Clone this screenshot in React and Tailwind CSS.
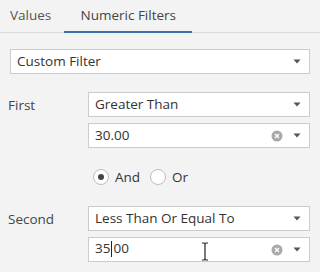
import React from 'react';

const font = { fontFamily: '"Open Sans", "Noto Sans", sans-serif' };

function Caret() {
  return (
    <svg width="8" height="5" viewBox="0 0 8 5" className="shrink-0">
      <path d="M0.5 0.5 L7.5 0.5 L4 4.5 Z" fill="#555" />
    </svg>
  );
}

function ClearIcon() {
  return (
    <svg width="12" height="12" viewBox="0 0 12 12" className="shrink-0">
      <circle cx="6" cy="6" r="5.5" fill="#a9a9a9" />
      <path d="M4 4 L8 8 M8 4 L4 8" stroke="#fff" strokeWidth="1.4" />
    </svg>
  );
}

function IBeam() {
  return (
    <svg width="8" height="19" viewBox="0 0 8 19" className="absolute left-[112px] top-[4px]">
      <path d="M1 1 H3 Q4 1 4 2.5 V16.5 Q4 18 3 18 H1 M7 1 H5 Q4 1 4 2.5 M4 16.5 Q4 18 5 18 H7" stroke="#222" strokeWidth="1.2" fill="none" />
    </svg>
  );
}

function Select({ value }) {
  return (
    <div className="flex items-center h-[25px] bg-white border border-[#cbcbcb] pl-[6px] pr-[8px]">
      <span className="flex-1 text-[13.5px] text-[#333] leading-none">{value}</span>
      <Caret />
    </div>
  );
}

function NumberInput({ value, caret }) {
  return (
    <div className="relative flex items-center h-[25px] bg-white border border-[#cbcbcb] pl-[6px] pr-[8px]">
      <span className="flex-1 text-[13.5px] text-[#333] leading-none">
        {caret ? (
          <>
            35<span className="inline-block w-px h-[16px] bg-[#222] align-middle -mt-[2px] mx-[1px]" />00
          </>
        ) : (
          value
        )}
      </span>
      {caret && <IBeam />}
      <div className="flex items-center gap-[10px]">
        <ClearIcon />
        <Caret />
      </div>
    </div>
  );
}

function Radio({ checked, label }) {
  return (
    <label className="flex items-center gap-[6px]">
      <span className="w-[16px] h-[16px] rounded-full bg-white border border-[#bdbdbd] flex items-center justify-center">
        {checked && <span className="w-[6px] h-[6px] rounded-full bg-[#444]" />}
      </span>
      <span className="text-[13.5px] text-[#333]">{label}</span>
    </label>
  );
}

export default function App() {
  return (
    <div className="w-[320px] h-[272px] bg-[#f3f3f3] overflow-hidden" style={font}>
      {/* tabs */}
      <div className="flex h-[33px] border-b border-[#dadada]">
        <div className="px-[10px] pt-[5px] text-[13.5px] text-[#555]">Values</div>
        <div className="ml-[3px] w-[128px] pt-[5px] text-center text-[13.5px] text-[#444] border-b-2 border-[#3d6fa8] -mb-px">
          Numeric Filters
        </div>
      </div>

      <div className="px-[10px] pt-[16px]">
        <Select value="Custom Filter" />

        <div className="flex mt-[18px]">
          <div className="w-[78px] -ml-[2px] pr-[2px] pt-[3px] text-[13.5px] text-[#444] box-content">First</div>
          <div className="flex-1 flex flex-col gap-[6px]">
            <Select value="Greater Than" />
            <NumberInput value="30.00" />
          </div>
        </div>

        <div className="flex gap-[10px] ml-[83px] mt-[20px] h-[18px] items-center">
          <Radio checked label="And" />
          <Radio label="Or" />
        </div>

        <div className="flex mt-[20px]">
          <div className="w-[78px] -ml-[2px] pr-[2px] pt-[3px] text-[13.5px] text-[#444] box-content">Second</div>
          <div className="flex-1 flex flex-col gap-[6px]">
            <Select value="Less Than Or Equal To" />
            <NumberInput value="35.00" caret />
          </div>
        </div>
      </div>
    </div>
  );
}
